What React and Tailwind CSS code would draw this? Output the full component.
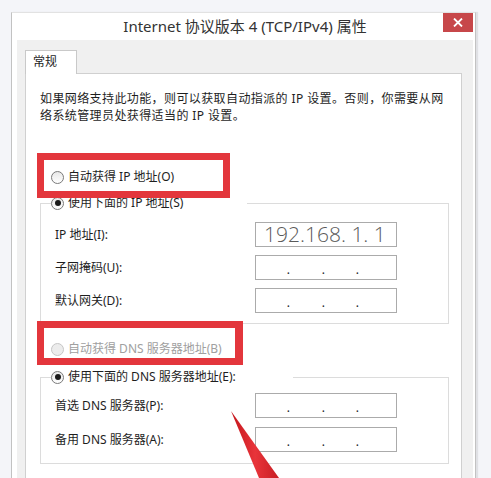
import React from "react";

function Radio({ checked, disabled }) {
  return (
    <div
      className={
        "w-[13px] h-[13px] rounded-full border flex items-center justify-center shrink-0 " +
        (disabled
          ? "border-[#c6c6c6] bg-[#ececec]"
          : "border-[#7a7a7a] bg-gradient-to-b from-[#e8e8e8] to-white")
      }
    >
      {checked && <div className="w-[6px] h-[6px] rounded-full bg-[#1a1a1a]" />}
    </div>
  );
}

function IpInput({ value }) {
  return (
    <div className="w-[142px] h-[25px] border border-[#ababab] bg-white flex items-center">
      {value ? (
        <span className="pl-[8px] text-[21px] leading-none text-[#5a5a5a] font-['Open_Sans','Noto_Sans',sans-serif] font-light">
          {value}
        </span>
      ) : (
        <div className="grid grid-cols-4 w-full text-[12px] leading-none text-[#222] pt-[4px]">
          <span className="text-right pr-[1px]">.</span>
          <span className="text-right pr-[1px]">.</span>
          <span className="text-right pr-[2px]">.</span>
          <span />
        </div>
      )}
    </div>
  );
}

function Row({ label, value }) {
  return (
    <div className="flex items-center h-[25px]">
      <span className="w-[200px]">{label}</span>
      <IpInput value={value} />
    </div>
  );
}

function GroupHeader({ label, lineWidth }) {
  return (
    <div className="flex items-center h-[16px]">
      <div className="w-[11px] h-[8px] self-end border-l border-t border-[#dcdcdc]" />
      <Radio checked />
      <span className="ml-[4px] whitespace-nowrap">{label}</span>
      <div
        className={"ml-auto h-[8px] self-end border-t border-r border-[#dcdcdc] " + lineWidth}
      />
    </div>
  );
}

export default function App() {
  return (
    <div className="relative w-[491px] h-[478px] overflow-hidden bg-[#f4f5f9] pt-[12px] pl-[11px] font-['Noto_Sans','Noto_Sans_CJK_SC',sans-serif] text-[12px] text-[#1e1e1e]">
      <div className="w-[465px] h-[475px] flex flex-col border border-[#c2c2c2] border-t-[#e2e2e2] bg-white pl-[5px] pr-[2px] shadow-[2px_0_1px_rgba(0,0,0,0.08)]">
        {/* title bar */}
        <div className="grid grid-cols-[1fr_auto_1fr] h-[27px]">
          <div />
          <div className="self-center text-[15px] text-[#333] whitespace-nowrap">
            Internet 协议版本 4 (TCP/IPv4) 属性
          </div>
          <div className="justify-self-end">
            <div className="w-[30px] h-[19px] bg-[#c7474a] flex items-center justify-center">
              <svg width="10" height="9" viewBox="0 0 10 9">
                <path d="M1 0.5 L9 8.5 M9 0.5 L1 8.5" stroke="#fff" strokeWidth="1.8" />
              </svg>
            </div>
          </div>
        </div>

        {/* body */}
        <div className="flex-1 bg-[#f0f0f0] pl-[8px] pr-[11px] pt-[10px] flex flex-col">
          <div className="relative z-10 -mb-px w-[52px] h-[24px] border border-b-0 border-[#c9c9c9] bg-white pl-[7px] pt-[2px]">
            常规
          </div>
          <div className="flex-1 border border-[#d0d0d0] bg-white pl-[14px] pt-[16px]">
            <p className="leading-[17px] whitespace-nowrap tracking-[0.4px]">
              如果网络支持此功能，则可以获取自动指派的 IP 设置。否则，你需要从网
              <br />
              络系统管理员处获得适当的 IP 设置。
            </p>

            <div className="mt-[45px] h-[16px] flex items-center pl-[11px]">
              <Radio />
              <span className="ml-[4px]">自动获得 IP 地址(O)</span>
            </div>

            <div className="mt-[10px] w-[409px]">
              <GroupHeader label="使用下面的 IP 地址(S)" lineWidth="w-[202px]" />
              <div className="border-l border-r border-b border-[#dcdcdc] pl-[14px] pt-[11px] pb-[10px] flex flex-col gap-[8px]">
                <Row label="IP 地址(I):" value="192.168. 1. 1" />
                <Row label="子网掩码(U):" />
                <Row label="默认网关(D):" />
              </div>
            </div>

            <div className="mt-[17px] h-[16px] flex items-center pl-[11px] text-[#a0a0a0]">
              <Radio disabled />
              <span className="ml-[4px]">自动获得 DNS 服务器地址(B)</span>
            </div>

            <div className="mt-[12px] w-[409px]">
              <GroupHeader label="使用下面的 DNS 服务器地址(E):" lineWidth="w-[156px]" />
              <div className="border-l border-r border-b border-[#dcdcdc] pl-[14px] pt-[8px] pb-[11px] flex flex-col gap-[9px]">
                <Row label="首选 DNS 服务器(P):" />
                <Row label="备用 DNS 服务器(A):" />
              </div>
            </div>
          </div>
        </div>
      </div>

      {/* red highlight boxes */}
      <div className="absolute left-[37px] top-[153px] w-[193px] h-[45px] border-[7px] border-[#e3363c]" />
      <div className="absolute left-[37px] top-[321px] w-[206px] h-[44px] border-[7px] border-r-[8px] border-[#e3363c]" />

      {/* red arrow */}
      <svg className="absolute left-0 top-0 pointer-events-none" width="491" height="478" viewBox="0 0 491 478">
        <defs>
          <linearGradient id="ar" x1="0" y1="0" x2="1" y2="0">
            <stop offset="0" stopColor="#c4161c" />
            <stop offset="0.5" stopColor="#e8343a" />
            <stop offset="1" stopColor="#c81e24" />
          </linearGradient>
        </defs>
        <polygon points="231,411 259,478 279,478" fill="url(#ar)" />
      </svg>
    </div>
  );
}
